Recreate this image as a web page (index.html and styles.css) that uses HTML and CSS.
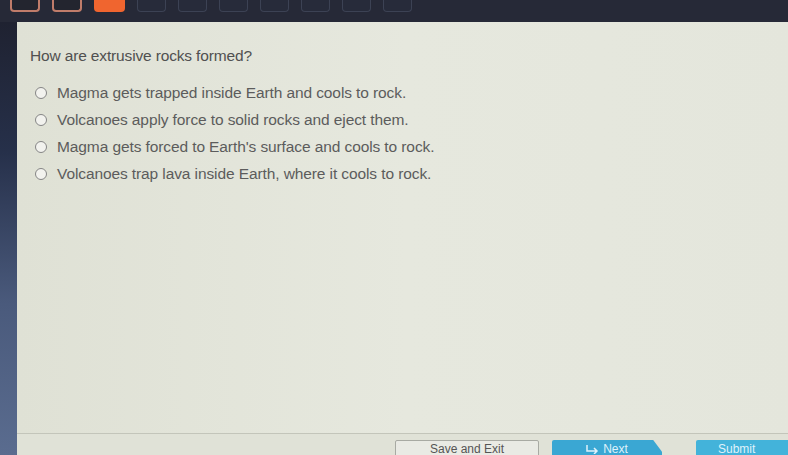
FILE: index.html
```html
<!DOCTYPE html>
<html>
<head>
<meta charset="utf-8">
<link rel="stylesheet" href="styles.css">
</head>
<body>
<div class="topbar">
  <div class="tile tile-done"></div>
  <div class="tile tile-done"></div>
  <div class="tile tile-current"></div>
  <div class="tile"></div>
  <div class="tile"></div>
  <div class="tile"></div>
  <div class="tile"></div>
  <div class="tile"></div>
  <div class="tile"></div>
  <div class="tile"></div>
</div>
<div class="main">
  <div class="sidebar"></div>
  <div class="panel">
    <div class="content">
      <p class="question">How are extrusive rocks formed?</p>
      <ul class="options">
        <li class="option"><span class="radio"></span>Magma gets trapped inside Earth and cools to rock.</li>
        <li class="option"><span class="radio"></span>Volcanoes apply force to solid rocks and eject them.</li>
        <li class="option"><span class="radio"></span>Magma gets forced to Earth's surface and cools to rock.</li>
        <li class="option"><span class="radio"></span>Volcanoes trap lava inside Earth, where it cools to rock.</li>
      </ul>
    </div>
    <div class="footer">
      <button class="btn btn-save">Save and Exit</button>
      <button class="btn btn-next"><svg class="next-icon" width="14" height="10" viewBox="0 0 14 10"><path d="M1 1 V7 H11 M8 4 L11 7 L8 10" fill="none" stroke="#dff2fb" stroke-width="1.5"/></svg>Next</button>
      <button class="btn btn-submit">Submit</button>
    </div>
  </div>
</div>
</body>
</html>
```
FILE: styles.css
```css
html, body {
  margin: 0;
  padding: 0;
  width: 788px;
  height: 455px;
  overflow: hidden;
  background: #262a3a;
  font-family: "Liberation Sans", Arial, sans-serif;
}
.topbar {
  height: 22px;
  display: flex;
  align-items: flex-start;
  padding-left: 10px;
  gap: 12px;
  background: #262937;
  box-sizing: border-box;
}
.tile {
  width: 29px;
  height: 12px;
  box-sizing: border-box;
  border: 1px solid #3c4254;
  border-top: none;
  border-radius: 0 0 4px 4px;
  background: #272b3a;
}
.tile-done {
  width: 30px;
  border: 2px solid #c07c6a;
  border-top: none;
  background: #23252f;
}
.tile-current {
  width: 31px;
  border: none;
  background: #f0652f;
}
.main {
  display: flex;
  height: 433px;
}
.sidebar {
  width: 17px;
  flex: none;
  background: linear-gradient(#1f2231 0%, #26304a 30%, #4a5a7c 65%, #5a6c8f 100%);
}
.panel {
  flex: 1;
  display: flex;
  flex-direction: column;
  background: #e3e5da;
  border-top-left-radius: 3px;
}
.content {
  flex: 1;
  padding: 25px 0 0 13px;
  background: linear-gradient(90deg, #dfe1d5 0%, #e6e8de 50%, #e4e6dc 100%);
}
.question {
  margin: 0;
  font-size: 15.5px;
  color: #505050;
  letter-spacing: -0.15px;
}
.options {
  list-style: none;
  margin: 14px 0 0 0;
  padding: 0 0 0 5px;
}
.option {
  display: flex;
  align-items: center;
  height: 27px;
  font-size: 15.5px;
  color: #5c5c5c;
  letter-spacing: -0.1px;
}
.radio {
  width: 10px;
  height: 10px;
  border: 1.8px solid #858585;
  border-radius: 50%;
  margin-right: 10px;
  background: #f2f2ee;
  flex: none;
}
.footer {
  height: 22px;
  border-top: 1px solid #c3c5ba;
  background: #e0e2d7;
  display: flex;
  align-items: flex-start;
  padding: 6px 0 0 378px;
  gap: 13px;
  box-sizing: border-box;
}
.btn {
  height: 26px;
  font-family: "Liberation Sans", Arial, sans-serif;
  font-size: 12px;
  border: none;
  padding: 0 0 8px 0;
  display: flex;
  align-items: center;
  justify-content: center;
  flex: none;
}
.btn-save {
  width: 144px;
  background: #e9eae4;
  border: 1px solid #a8aaa3;
  border-radius: 2px;
  color: #555;
}
.btn-next {
  width: 110px;
  background: #3aa7d3;
  color: #dff2fb;
  gap: 3px;
  clip-path: polygon(0 0, 92% 0, 100% 45%, 100% 100%, 0 100%);
  border-radius: 2px 0 0 0;
}
.btn-submit {
  width: 100px;
  margin-left: 21px;
  background: #43b3da;
  color: #dff2fb;
  border-radius: 2px 0 0 0;
  justify-content: flex-start;
  padding-left: 22px;
}
```
